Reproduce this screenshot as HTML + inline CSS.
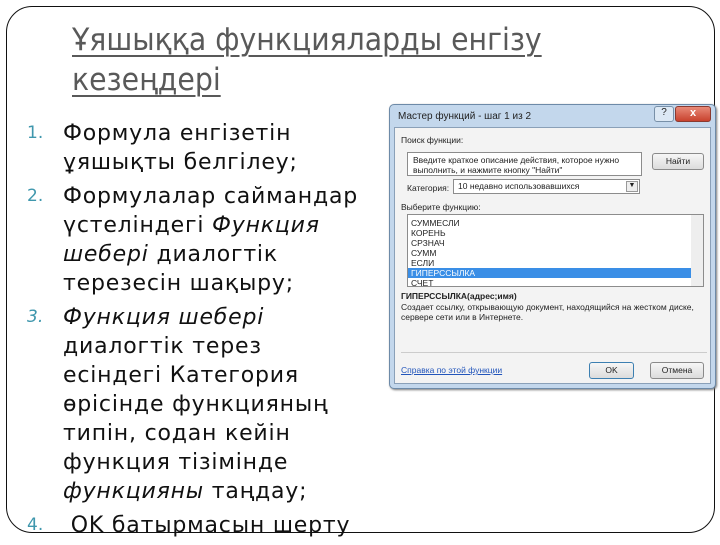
<!DOCTYPE html>
<html><head><meta charset="utf-8"><style>
*{margin:0;padding:0;box-sizing:border-box}
body{width:720px;height:540px;background:#fff;position:relative;overflow:hidden;font-family:"DejaVu Sans","Liberation Sans",sans-serif}
.frame{position:absolute;left:6px;top:6px;width:709px;height:527px;border:1.5px solid #111;border-radius:26px}
.title{position:absolute;left:72px;top:20px;font-family:"DejaVu Sans Condensed","DejaVu Sans",sans-serif;font-size:31.5px;line-height:40px;color:#595959;text-decoration:underline;text-decoration-thickness:2px;text-underline-offset:5px;white-space:nowrap}
.body{position:absolute;left:0;top:119px;font-size:22px;color:#111;letter-spacing:0.8px;white-space:nowrap}
.li{position:relative;padding-left:63px;line-height:29px;margin-bottom:5px}
.n{position:absolute;left:27px;top:0;color:#3f97ad;font-size:17px;letter-spacing:0}
i{font-style:italic}
.dlg{position:absolute;left:389px;top:104px;width:327px;height:285px;background:#c3d7ec;border:1px solid #6d8aa8;border-radius:5px;font-family:"Liberation Sans",sans-serif;font-size:8.5px;color:#222;box-shadow:1px 1px 2px #777}
.in{position:absolute;left:4px;top:22px;right:4px;bottom:4px;background:#f3f3f3;border:1px solid #8aa0b8}
.a{position:absolute;white-space:nowrap}
.box{position:absolute;background:#fff;border:1px solid #8c8c8c}
.btn{position:absolute;border:1px solid #8a8a8a;border-radius:3px;background:linear-gradient(#f6f6f6,#dcdcdc);text-align:center;line-height:15px}
</style></head><body>
<div class="frame"></div>
<div class="title">Ұяшыққа функцияларды енгізу<br>кезеңдері</div>
<div class="body">
<div class="li"><span class="n">1.</span>Формула енгізетін<br>ұяшықты белгілеу;</div>
<div class="li"><span class="n">2.</span>Формулалар саймандар<br>үстеліндегі <i>Функция</i><br><i>шебері</i> диалогтік<br>терезесін шақыру;</div>
<div class="li"><span class="n"><i>3.</i></span><i>Функция шебері</i><br>диалогтік терез<br>есіндегі Категория<br>өрісінде функцияның<br>типін, содан кейін<br>функция тізімінде<br><i>функцияны</i> таңдау;</div>
<div class="li"><span class="n">4.</span>&nbsp;OK батырмасын шерту</div>
</div>
<div class="dlg">
<div class="a" style="left:8px;top:6px;font-size:10px">Мастер функций - шаг 1 из 2</div>
<div class="a" style="left:264px;top:1px;width:20px;height:16px;border:1px solid #7890a8;border-radius:3px;background:#dce8f4;text-align:center;font-size:10px">?</div>
<div class="a" style="left:285px;top:1px;width:36px;height:16px;border:1px solid #8a3a30;border-radius:3px;background:linear-gradient(#e88a78,#c8422e);color:#fff;text-align:center;font-size:11px;font-weight:bold">x</div>
<div class="in">
<div class="a" style="left:6px;top:7px">Поиск функции:</div>
<div class="box" style="left:12px;top:24px;width:235px;height:24px;padding:2px 5px;line-height:10px">Введите краткое описание действия, которое нужно<br>выполнить, и нажмите кнопку "Найти"</div>
<div class="btn" style="left:257px;top:25px;width:52px;height:17px">Найти</div>
<div class="a" style="left:12px;top:55px">Категория:</div>
<div class="box" style="left:58px;top:51px;width:187px;height:15px;padding:1px 4px">10 недавно использовавшихся<span style="position:absolute;right:1px;top:1px;width:12px;height:11px;border:1px solid #999;background:#eee;font-size:7px;text-align:center">▼</span></div>
<div class="a" style="left:6px;top:74px">Выберите функцию:</div>
<div class="box" style="left:12px;top:86px;width:297px;height:73px;line-height:10px;padding-top:3px">
<div style="padding-left:3px">СУММЕСЛИ</div><div style="padding-left:3px">КОРЕНЬ</div><div style="padding-left:3px">СРЗНАЧ</div><div style="padding-left:3px">СУММ</div><div style="padding-left:3px">ЕСЛИ</div>
<div style="padding-left:3px;background:#3a8ee6;color:#fff;width:283px">ГИПЕРССЫЛКА</div><div style="padding-left:3px">СЧЕТ</div>
<div style="position:absolute;right:0;top:0;width:12px;height:71px;background:#eee"></div>
</div>
<div class="a" style="left:6px;top:163px;font-weight:bold">ГИПЕРССЫЛКА(адрес;имя)</div>
<div class="a" style="left:6px;top:174px;line-height:10px">Создает ссылку, открывающую документ, находящийся на жестком диске,<br>сервере сети или в Интернете.</div>
<div class="a" style="left:6px;top:224px;width:306px;border-top:1px solid #ccc"></div>
<div class="a" style="left:6px;top:237px;color:#2255bb;text-decoration:underline">Справка по этой функции</div>
<div class="btn" style="left:194px;top:234px;width:45px;height:17px;border-color:#3c7fb1">OK</div>
<div class="btn" style="left:255px;top:234px;width:54px;height:17px">Отмена</div>
</div>
</div>
</body></html>
